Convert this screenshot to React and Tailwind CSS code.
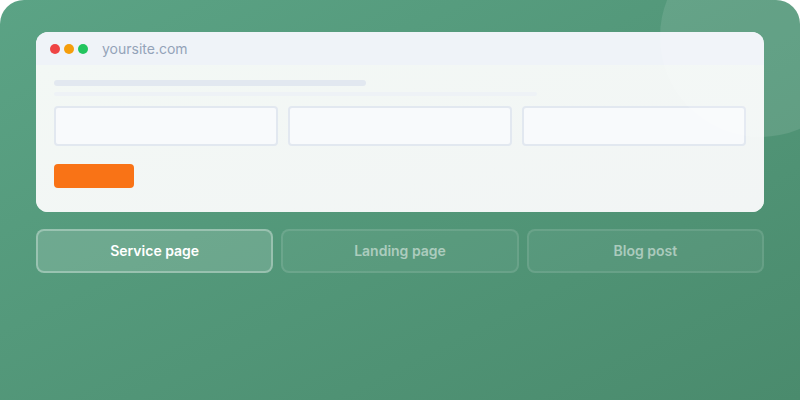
export default function App() {
  const tabs = [
    { label: "Service page", active: true },
    { label: "Landing page", active: false },
    { label: "Blog post", active: false },
  ]

  return (
    <div className="h-[400px] overflow-hidden bg-white" style={{ fontFamily: "Inter, 'Noto Sans', sans-serif" }}>
      <div className="relative h-[400px] overflow-hidden rounded-t-3xl bg-gradient-to-br from-[#5ba385] to-[#4a8b6d] px-9 pt-8">
        {/* browser mock */}
        <div className="overflow-hidden rounded-xl bg-[#f3f7f5]">
          <div className="flex h-[33px] items-center gap-3.5 bg-[#eff3f8] px-3.5">
            <div className="flex gap-1">
              <span className="h-2.5 w-2.5 rounded-full bg-[#ef4444]"></span>
              <span className="h-2.5 w-2.5 rounded-full bg-[#f59e0b]"></span>
              <span className="h-2.5 w-2.5 rounded-full bg-[#22c55e]"></span>
            </div>
            <span className="pt-px text-sm text-[#94a3b8]">yoursite.com</span>
          </div>
          <div className="bg-gradient-to-br from-[#f3f8f5] to-[#f2f5f5] px-[18px] pt-[15px] pb-6">
            <div className="h-1.5 w-[312px] rounded-full bg-[#e2e8f0]"></div>
            <div className="mt-1.5 h-1 w-[483px] rounded-full bg-[#eef2f6]"></div>
            <div className="mt-2.5 grid grid-cols-3 gap-2.5">
              <div className="h-10 rounded-[4px] border-2 border-[#e2e8f0] bg-[#f8fafc]"></div>
              <div className="h-10 rounded-[4px] border-2 border-[#e2e8f0] bg-[#f8fafc]"></div>
              <div className="h-10 rounded-[4px] border-2 border-[#e2e8f0] bg-[#f8fafc]"></div>
            </div>
            <div className="mt-[18px] h-6 w-20 rounded-[4px] bg-[#f97316]"></div>
          </div>
        </div>

        {/* tabs */}
        <div className="mt-[17px] grid grid-cols-3 gap-2">
          {tabs.map((tab) => (
            <button
              key={tab.label}
              className={
                tab.active
                  ? "h-11 rounded-lg border-2 border-white/30 bg-white/15 text-sm font-semibold text-white"
                  : "h-11 rounded-lg border-2 border-white/10 bg-white/5 text-sm font-semibold text-white/50"
              }
            >
              {tab.label}
            </button>
          ))}
        </div>

        {/* decorative circle */}
        <div className="pointer-events-none absolute -top-[63px] -right-[60px] h-[200px] w-[200px] rounded-full bg-white/10"></div>
      </div>
    </div>
  )
}
